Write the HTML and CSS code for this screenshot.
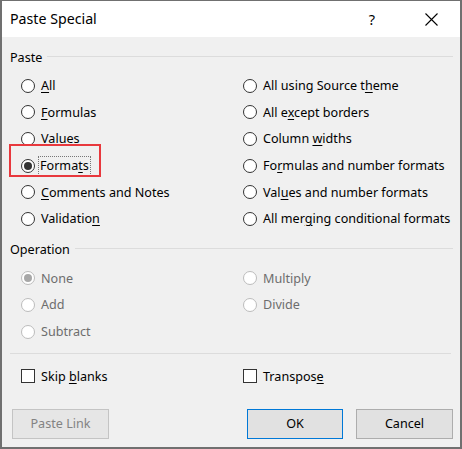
FILE: index.html
```html
<!DOCTYPE html>
<html lang="en">
<head>
<meta charset="utf-8">
<title>Paste Special</title>
<link rel="stylesheet" href="styles.css">
</head>
<body>
<div class="window">
  <div class="titlebar">
    <span class="title">Paste Special</span>
    <span class="help">?</span>
    <span class="close">
      <svg width="13" height="13" viewBox="0 0 13 13"><path d="M0.5 0.5 L12.5 12.5 M12.5 0.5 L0.5 12.5" stroke="#000" stroke-width="1.1" fill="none"/></svg>
    </span>
  </div>
  <div class="content">
    <div class="group-head"><span>Paste</span><span class="rule"></span></div>
    <div class="options">
      <div class="opt"><span class="radio"></span><span class="lbl"><u>A</u>ll</span></div>
      <div class="opt"><span class="radio"></span><span class="lbl">All using Source t<u>h</u>eme</span></div>
      <div class="opt"><span class="radio"></span><span class="lbl"><u>F</u>ormulas</span></div>
      <div class="opt"><span class="radio"></span><span class="lbl">All e<u>x</u>cept borders</span></div>
      <div class="opt"><span class="radio"></span><span class="lbl"><u>V</u>alues</span></div>
      <div class="opt"><span class="radio"></span><span class="lbl">Column <u>w</u>idths</span></div>
      <div class="opt highlight"><span class="radio checked"></span><span class="lbl focus">Forma<u>t</u>s</span><span class="mark"></span></div>
      <div class="opt"><span class="radio"></span><span class="lbl">Fo<u>r</u>mulas and number formats</span></div>
      <div class="opt"><span class="radio"></span><span class="lbl"><u>C</u>omments and Notes</span></div>
      <div class="opt"><span class="radio"></span><span class="lbl">Val<u>u</u>es and number formats</span></div>
      <div class="opt"><span class="radio"></span><span class="lbl">Validatio<u>n</u></span></div>
      <div class="opt"><span class="radio"></span><span class="lbl">All mer<u>g</u>ing conditional formats</span></div>
    </div>
    <div class="group-head op-head"><span>Operation</span><span class="rule"></span></div>
    <div class="options op-options">
      <div class="opt disabled"><span class="radio checked"></span><span class="lbl">None</span></div>
      <div class="opt disabled"><span class="radio"></span><span class="lbl">Multiply</span></div>
      <div class="opt disabled"><span class="radio"></span><span class="lbl">Add</span></div>
      <div class="opt disabled"><span class="radio"></span><span class="lbl">Divide</span></div>
      <div class="opt disabled"><span class="radio"></span><span class="lbl">Subtract</span></div>
    </div>
    <div class="separator"></div>
    <div class="options checks">
      <div class="opt"><span class="checkbox"></span><span class="lbl">Skip <u>b</u>lanks</span></div>
      <div class="opt"><span class="checkbox"></span><span class="lbl">Transpos<u>e</u></span></div>
    </div>
    <div class="buttons">
      <button class="btn disabled-btn">Paste Link</button>
      <div class="btn-group">
        <button class="btn default">OK</button>
        <button class="btn">Cancel</button>
      </div>
    </div>
  </div>
</div>
</body>
</html>
```

FILE: styles.css
```css
* { box-sizing: border-box; }
html, body { margin: 0; padding: 0; }
body {
  width: 462px;
  height: 449px;
  font-family: "Noto Sans", "Open Sans", sans-serif;
  font-size: 12.6px;
  color: #000;
  background: #fff;
}
.window {
  width: 462px;
  height: 449px;
  border-style: solid;
  border-color: #707070;
  border-width: 1px 2px 2px 2px;
  display: flex;
  flex-direction: column;
}
.titlebar {
  height: 36px;
  background: #fff;
  display: flex;
  align-items: center;
  padding-left: 8px;
}
.title {
  font-size: 14.2px;
  flex: 1;
  line-height: 20px;
}
.help {
  font-size: 14.5px;
  width: 20px;
  text-align: center;
  margin-right: 43px;
}
.close {
  width: 13px;
  height: 13px;
  margin-right: 22px;
  display: flex;
}
.content {
  flex: 1;
  background: #f0f0f0;
  padding: 13px 7px 0 8px;
  display: flex;
  flex-direction: column;
}
.group-head {
  display: flex;
  align-items: center;
  gap: 5px;
  height: 16px;
  line-height: 16px;
}
.rule {
  flex: 1;
  border-top: 1px solid #dcdcdc;
  margin-top: -3px;
}
.options {
  display: grid;
  grid-template-columns: 222px 1fr;
  grid-auto-rows: 26.6px;
  padding-left: 11px;
  margin-top: 6.5px;
}
.opt {
  display: flex;
  align-items: center;
  gap: 6px;
  position: relative;
  justify-self: start;
  white-space: nowrap;
}
.radio {
  width: 14px;
  height: 14px;
  border: 1px solid #333;
  border-radius: 50%;
  background: #fff;
  flex: none;
  display: flex;
  align-items: center;
  justify-content: center;
}
.radio.checked::after {
  content: "";
  width: 8px;
  height: 8px;
  border-radius: 50%;
  background: #333;
}
.lbl u { text-decoration-thickness: 1px; text-underline-offset: 2px; }
.focus {
  outline: 1px dotted #777;
  outline-offset: 0;
  padding: 0 1px;
  margin-left: -2px;
  line-height: 18px;
}
.mark {
  position: absolute;
  left: -12px;
  top: -8px;
  width: 92px;
  height: 33px;
  border: 2px solid #e8383d;
}
.op-head { margin-top: 10px; }
.op-options { margin-top: 7px; }
.disabled { color: #6d6d6d; }
.disabled .radio { border-color: #bcbcbc; }
.disabled .radio.checked::after { background: #a8a8a8; }
.separator {
  border-top: 1px solid #dcdcdc;
  margin-top: 8.6px;
  margin-right: 2px;
}
.checks { margin-top: 8.5px; }
.buttons {
  margin-top: 19px;
  display: flex;
  justify-content: space-between;
  padding-left: 2px;
}
.checkbox {
  width: 14px;
  height: 14px;
  border: 1px solid #333;
  background: #fff;
  flex: none;
}
.btn-group { display: flex; gap: 13px; }
.btn {
  font-family: inherit;
  font-size: 12.6px;
  height: 30px;
  width: 97px;
  background: #e1e1e1;
  border: 1px solid #adadad;
  color: #000;
  padding: 0;
}
.btn.default { border-color: #0078d7; width: 96px; }
.disabled-btn {
  background: #e6e6e6;
  border-color: #c4c4c4;
  color: #838383;
}
```
